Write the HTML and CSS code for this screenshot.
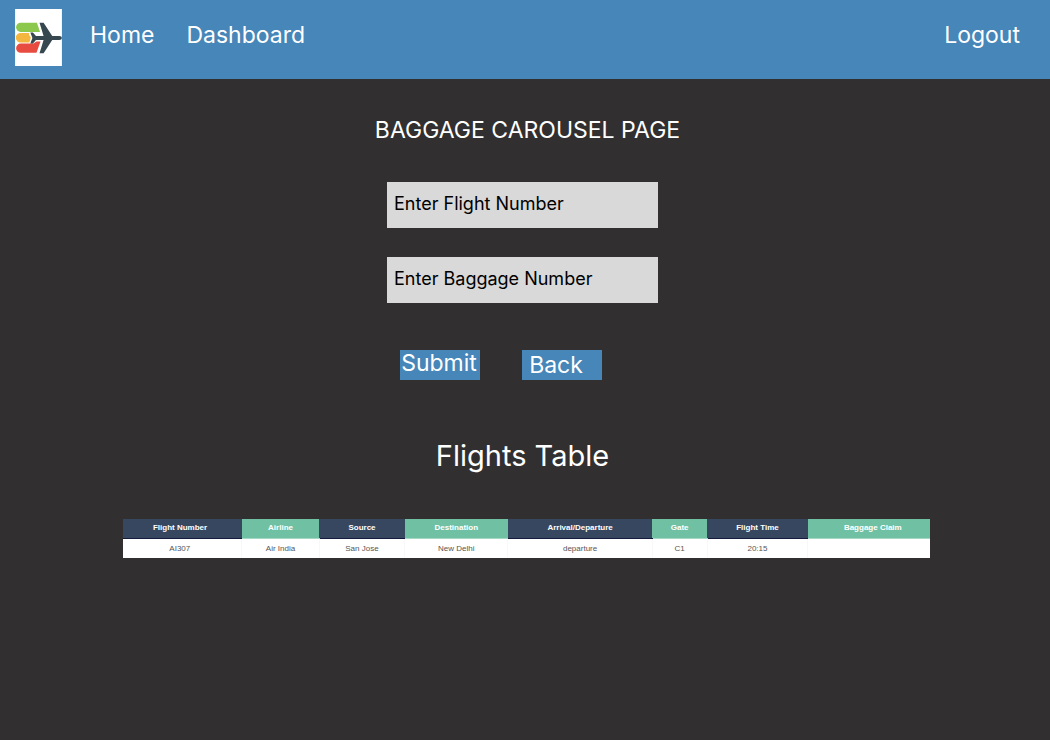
FILE: index.html
```html
<!DOCTYPE html>
<html lang="en">
<head>
<meta charset="utf-8">
<meta name="viewport" content="width=device-width, initial-scale=1">
<title>Baggage Carousel</title>
<link rel="stylesheet" href="styles.css">
</head>
<body>
<header class="topbar">
  <a class="logo" href="#" aria-label="Airport home">
    <svg viewBox="0 0 46 56" aria-hidden="true">
      <rect width="46" height="56" fill="#fff"/>
      <path d="M5.500 13.500H21.500L24.500 22.500H5.500A4.500 4.500 0 0 1 5.500 13.500Z" fill="#8bc84b"/>
      <path d="M5.500 23.500H14L13.500 25L15.500 28L14 33H5.500A4.700 4.700 0 0 1 5.500 23.500Z" fill="#f3b63f"/>
      <path d="M5.500 34H18L21 32H25L21 43H5.500A4.500 4.500 0 0 1 5.500 34Z" fill="#e84b3f"/>
      <path d="M15 23H17.500L20.500 26.500H28L24 13.500H28L36.500 26.500H43.500Q46 26.500 46 28.500T43.500 30.500H36.500L28 43.500H24L28 30.500H20.500L17.500 34H15L17 28.500Z" fill="#36474f"/>
    </svg>
  </a>
  <nav class="nav">
    <a href="#">Home</a>
    <a href="#">Dashboard</a>
    <a class="logout" href="#">Logout</a>
  </nav>
</header>
<main class="page">
  <h1 class="title">BAGGAGE CAROUSEL PAGE</h1>
  <form class="search">
    <input class="field" type="text" placeholder="Enter Flight Number" aria-label="Flight number">
    <input class="field" type="text" placeholder="Enter Baggage Number" aria-label="Baggage number">
    <div class="actions">
      <button class="button" type="submit">Submit</button>
      <button class="button button-back" type="button">Back</button>
    </div>
  </form>
  <h2 class="subtitle">Flights Table</h2>
  <table class="flights">
    <colgroup>
      <col class="col-number"><col class="col-airline"><col class="col-source"><col class="col-destination"><col class="col-direction"><col class="col-gate"><col class="col-time"><col class="col-claim">
    </colgroup>
    <thead>
      <tr><th>Flight Number</th><th>Airline</th><th>Source</th><th>Destination</th><th>Arrival/Departure</th><th>Gate</th><th>Flight Time</th><th>Baggage Claim</th></tr>
    </thead>
    <tbody>
      <tr><td>AI307</td><td>Air India</td><td>San Jose</td><td>New Delhi</td><td>departure</td><td>C1</td><td>20:15</td><td></td></tr>
    </tbody>
  </table>
</main>
</body>
</html>
```
FILE: styles.css
```css
* {
  box-sizing: border-box;
}

body {
  margin: 0;
  min-height: 100vh;
  background: #322f30;
  color: #fff;
  font-family: Inter, "Liberation Sans", sans-serif;
  font-weight: 400;
}

.topbar {
  display: flex;
  align-items: flex-start;
  gap: 28px;
  padding: 9px 30px 13px 15px;
  background: #4686b8;
}

.logo svg {
  display: block;
  width: 47px;
  height: 57px;
}

.nav {
  display: flex;
  flex: 1;
  gap: 32px;
  padding-top: 11px;
  font-size: 23px;
  line-height: 30px;
}

.nav a {
  color: #fff;
  text-decoration: none;
}

.nav .logout {
  margin-left: auto;
}

.page {
  display: flex;
  flex-direction: column;
  align-items: center;
  padding: 36px 0;
}

.title,
.subtitle {
  margin: 0;
  font-weight: 400;
}

.title {
  padding-left: 5px;
  font-size: 23px;
  line-height: 30px;
}

.search {
  display: flex;
  flex-direction: column;
  gap: 29px;
  width: 271px;
  margin: 37px 5px 0 0;
}

.field {
  width: 100%;
  height: 46px;
  padding: 0 7px 4px;
  border: 0;
  border-radius: 0;
  background: #d9d9d9;
  color: #000;
  font: inherit;
  font-size: 18px;
}

.field::placeholder {
  color: #000;
  opacity: 1;
}

.actions {
  display: flex;
  gap: 42px;
  padding: 18px 13px 0;
}

.button {
  width: 80px;
  height: 30px;
  padding: 0 2px 3px 0;
  border: 0;
  background: #4686b8;
  color: #fff;
  font: inherit;
  font-size: 23px;
  line-height: 27px;
}

.button-back {
  padding: 0 12px 0 0;
}

.subtitle {
  margin: 58px 5px 0 0;
  font-size: 29px;
  line-height: 36px;
}

.flights {
  width: 76.800%;
  margin: 45px 0 0 3px;
  table-layout: fixed;
  border-collapse: collapse;
  background: #fff;
  font-family: "Liberation Sans", Arial, sans-serif;
  font-size: 8px;
  line-height: 8px;
  text-align: center;
}

.flights th {
  height: 19px;
  padding: 0 0 1px;
  border-bottom: 1px solid #161b3d;
  background: #37475f;
  color: #fff;
  font-weight: 700;
}

.flights th:nth-child(even) {
  border-bottom-color: #a5d8c4;
  background: #70c0a4;
}

.flights td {
  height: 20px;
  padding: 1px 0 0;
  color: #555;
  font-weight: 400;
}

.flights td + td {
  border-left: 1px solid #f8f8f8;
}

.flights th:first-child,
.flights td:first-child {
  padding-right: 5px;
}

.flights th:last-child {
  padding-left: 8px;
}

.col-number { width: 14.700%; }
.col-airline { width: 9.600%; }
.col-source { width: 10.600%; }
.col-destination { width: 12.800%; }
.col-direction { width: 17.900%; }
.col-gate { width: 6.800%; }
.col-time { width: 12.500%; }
.col-claim { width: 15.100%; }
```
